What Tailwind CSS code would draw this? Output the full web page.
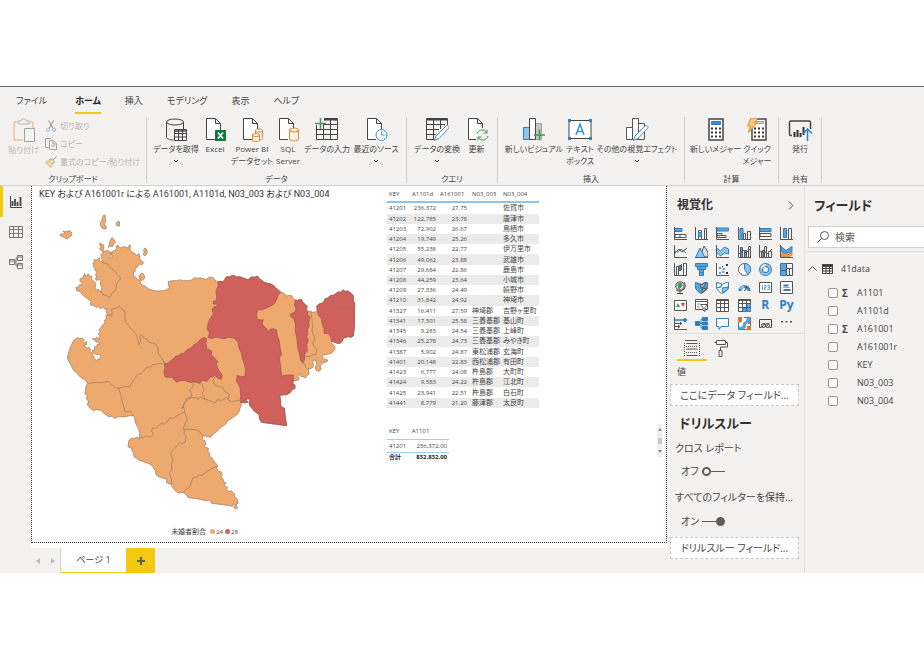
<!DOCTYPE html>
<html lang="ja">
  <head>
    <meta charset="UTF-8" />
    <meta name="viewport" content="width=device-width, initial-scale=1.0" />
    <title>Power BI Desktop</title>
    <script src="https://cdn.jsdelivr.net/npm/@tailwindcss/browser@4"></script>
  </head>
  <body
    class="bg-white pt-[86px] font-['Open_Sans','Noto_Sans_CJK_JP',sans-serif] [font-feature-settings:'palt'] text-[#444]"
  >
    <!-- Ribbon -->
    <header class="border-t border-t-[#666] border-b border-b-[#d2d0ce] bg-[#f3f2f1]">
      <nav class="flex h-[30px] gap-6 pl-4 text-[9px] leading-[28px] whitespace-nowrap">
        <a href="#" class="mr-1">ファイル</a>
        <a href="#" class="flex flex-col font-bold text-[#222]">
          <span class="h-[25px]">ホーム</span>
          <span class="h-[2px] bg-[#f2c811]"></span>
        </a>
        <a href="#">挿入</a>
        <a href="#">モデリング</a>
        <a href="#">表示</a>
        <a href="#">ヘルプ</a>
      </nav>

      <div class="flex h-[68px] pb-[2px] text-[8px] leading-[12px] whitespace-nowrap [&_p]:leading-[8px]">
        <!-- Clipboard -->
        <section class="flex w-[147px] flex-col justify-between border-r border-[#d2d0ce]">
          <div class="flex gap-[6px] pl-[8px] text-[#b5b3b1]">
            <button class="flex w-[31px] flex-col items-center self-start pt-px">
              <svg class="h-[26px] w-[24px]" viewBox="0 0 24 26" fill="none">
                <path d="M5 4H2v18h9M17 4h4v6" stroke="#efc893" stroke-width="1.5" />
                <path d="M6 6V3h3c0-3 5-3 5 0h3v3z" stroke="#b9b7b5" />
                <path d="M12.500 10.500h10v13h-10z" stroke="#a5a3a1" fill="#f6f5f4" />
              </svg>
              <span>貼り付け</span>
            </button>
            <div class="flex flex-col gap-[6px] pt-[3px]">
              <button class="flex items-center gap-[3px]">
                <svg class="size-3" viewBox="0 0 12 12" fill="none">
                  <path d="M3.500 0.500L8 8.500M8.500 0.500L4 8.500" stroke="#8f8d8b" />
                  <circle cx="3" cy="9.800" r="1.600" stroke="#9dbcd8" />
                  <circle cx="9" cy="9.800" r="1.600" stroke="#9dbcd8" />
                </svg>
                切り取り
              </button>
              <button class="flex items-center gap-[3px]">
                <svg class="size-3" viewBox="0 0 12 12" fill="none" stroke="#a5a3a1">
                  <path d="M4 9.500H.5V.5H6" />
                  <path d="M4.500 2.500h4l3 3v6h-7zM8 3v3h3M6 8h4" />
                </svg>
                コピー
              </button>
              <button class="flex items-center gap-[3px]">
                <svg class="size-3" viewBox="0 0 12 12" fill="none">
                  <path d="M.5 6l4-2 3.500 3.500-2.500 4z" fill="#f4d2a8" stroke="#e3b988" />
                  <path d="M4.500 4l1.500-1.500 3.500 3.500L8 7.500M8 4l3.500-3.500" stroke="#8f8d8b" />
                </svg>
                書式のコピー/貼り付け
              </button>
            </div>
          </div>
          <p class="text-center">クリップボード</p>
        </section>

        <!-- Data -->
        <section class="flex w-[260px] flex-col justify-between border-r border-[#d2d0ce]">
          <div class="flex pl-[5px] pt-px">
            <button class="flex w-[48px] flex-col items-center">
              <svg class="h-[25px] w-6" viewBox="0 0 24 25" fill="none" stroke="#444">
                <ellipse cx="11" cy="4" rx="8.500" ry="3" />
                <path d="M2.500 4v15c0 1.500 3 3 7 3M19.500 4v7" />
                <path d="M10.500 11.500h12v11h-12zM10.500 15.500h12M10.500 19h12M14.500 12v10M18.500 12v10" fill="#f8f8f8" />
                <path d="M11 13h11" stroke-width="1.500" />
              </svg>
              <span>データを取得</span>
              <svg class="mt-1 h-1 w-[6px]" viewBox="0 0 6 4" fill="none" stroke="#333"><path d="M1 1l2 2 2-2" /></svg>
            </button>
            <button class="flex w-[30px] flex-col items-center">
              <svg class="h-[25px] w-6" viewBox="0 0 24 25" fill="none">
                <path d="M12 21.500H3.500V.5h9l5 5V13M12.500.5v5h5" fill="#fff" stroke="#444" />
                <path d="M12 12h11v11H12z" fill="#10793f" />
                <path d="M15 14.500l5 6M20 14.500l-5 6" stroke="#fff" stroke-width="1.500" />
              </svg>
              <span>Excel</span>
            </button>
            <button class="flex w-[44px] flex-col items-center">
              <svg class="h-[25px] w-6" viewBox="0 0 24 25" fill="none">
                <path d="M12 21.500H3.500V.5h9l5 5V11M12.500.5v5h5" fill="#fff" stroke="#444" />
                <path d="M15.500 12.500v8c0 2 7 2 7 0v-8c0-2-7-2-7 0c0 2 7 2 7 0" stroke="#de8437" fill="#fdf1e6" />
                <path d="M12.500 17v5c0 2 7 2 7 0v-5c0-2-7-2-7 0c0 2 7 2 7 0" stroke="#de8437" fill="#fdf1e6" />
              </svg>
              <span>Power BI<br />データセット</span>
            </button>
            <button class="flex w-[28px] flex-col items-center">
              <svg class="h-[25px] w-6" viewBox="0 0 24 25" fill="none">
                <path d="M12 21.500H3.500V.5h9l5 5V10M12.500.5v5h5" fill="#fff" stroke="#444" />
                <path d="M13.500 12v9c0 2.500 9 2.500 9 0v-9c0-2.500-9-2.500-9 0c0 2.500 9 2.500 9 0" stroke="#de8437" fill="#fdf1e6" />
              </svg>
              <span>SQL<br />Server</span>
            </button>
            <button class="flex w-[50px] flex-col items-center">
              <svg class="h-[25px] w-6" viewBox="0 0 24 25" fill="none">
                <path d="M1.500 7v14.500h21V.5H9M8.500 6v15.500M15.500 2v19.500M9 6.500h13M2 11.500h20M2 16.500h20" stroke="#444" />
                <path d="M9 1.500h13" stroke="#444" stroke-width="2" />
                <path d="M5.500 0v11M0 5.500h11" stroke="#3f9b55" stroke-width="1.500" />
              </svg>
              <span>データの入力</span>
            </button>
            <button class="flex w-[48px] flex-col items-center">
              <svg class="h-[25px] w-6" viewBox="0 0 24 25" fill="none">
                <path d="M12 21.500H3.500V.5h9l5 5V12M12.500.5v5h5" fill="#fff" stroke="#444" />
                <circle cx="17.500" cy="17" r="5.500" fill="#fff" stroke="#3a8fcf" />
                <path d="M17.500 13.500V17h3" stroke="#3a8fcf" />
              </svg>
              <span>最近のソース</span>
              <svg class="mt-1 h-1 w-[6px]" viewBox="0 0 6 4" fill="none" stroke="#333"><path d="M1 1l2 2 2-2" /></svg>
            </button>
          </div>
          <p class="text-center">データ</p>
        </section>

        <!-- Queries -->
        <section class="flex w-[91px] flex-col justify-between border-r border-[#d2d0ce]">
          <div class="flex pl-[5px] pt-px">
            <button class="flex w-[50px] flex-col items-center">
              <svg class="h-[25px] w-6" viewBox="0 0 24 25" fill="none">
                <path d="M10 21.500H1.500V.5h21V7M8.500 2v19.500M15.500 2v9M2 6.500h18M2 11.500h12M2 16.500h9" stroke="#444" />
                <path d="M2 1.500h20" stroke="#444" stroke-width="2" />
                <path d="M9.500 22.500l1.500-4.500L21 8c1.500-1.500 4 .8 2.500 2.500L14 20.500z" fill="#fff" stroke="#3a8fcf" />
              </svg>
              <span>データの変換</span>
              <svg class="mt-1 h-1 w-[6px]" viewBox="0 0 6 4" fill="none" stroke="#333"><path d="M1 1l2 2 2-2" /></svg>
            </button>
            <button class="flex w-[29px] flex-col items-center">
              <svg class="h-[25px] w-6" viewBox="0 0 24 25" fill="none">
                <path d="M11 21.500H3.500V.5h9l5 5V10M12.500.5v5h5" fill="#fff" stroke="#444" />
                <path d="M12 16c1-5 8-5.500 10-1v-3.500M22 15h-3.500M23 18c-1 5-8 5.500-10 1v3.500M13 19h3.500" stroke="#3f9b55" />
              </svg>
              <span>更新</span>
            </button>
          </div>
          <p class="text-center">クエリ</p>
        </section>

        <!-- Insert -->
        <section class="flex w-[187px] flex-col justify-between border-r border-[#d2d0ce]">
          <div class="flex pl-[6px] pt-px">
            <button class="flex w-[60px] flex-col items-center">
              <svg class="h-[25px] w-6" viewBox="0 0 24 25" fill="none">
                <path d="M1.500 9.500h6v12h-6z" fill="#8fc5ee" stroke="#2f7fbd" />
                <path d="M13.500 5.500h6v16h-6z" fill="#c8c6c4" stroke="#a5a3a1" />
                <path d="M7.500.5h6v21h-6z" fill="#fff" stroke="#444" />
                <path d="M17.500 11.500v11M12 17h11" stroke="#3f9b55" stroke-width="1.500" />
              </svg>
              <span>新しいビジュアル</span>
            </button>
            <button class="flex w-[32px] flex-col items-center">
              <svg class="h-[25px] w-[26px]" viewBox="0 0 26 25" fill="none">
                <path d="M2 2.500h22v18H2z" stroke="#444" fill="#fff" />
                <path d="M9 17l4-11 4 11M10.500 13.500h5" stroke="#3a8fcf" stroke-width="1.500" />
                <path d="M1 1h3v3H1zM22 1h3v3h-3zM1 19h3v3H1zM22 19h3v3h-3z" fill="#2f7fbd" />
              </svg>
              <span>テキスト<br />ボックス</span>
            </button>
            <button class="flex w-[82px] flex-col items-center">
              <svg class="h-[25px] w-6" viewBox="0 0 24 25" fill="none">
                <path d="M1.500 9.500h6v12h-6zM13.500 5.500h6v16h-6zM7.500.5h6v21h-6z" fill="#fff" stroke="#555" />
                <path d="M8.500 22.500l1.500-4.500L20 8c1.500-1.500 4 .8 2.500 2.500L13 20.500z" fill="#fff" stroke="#3a8fcf" />
              </svg>
              <span>その他の視覚エフェクト</span>
              <svg class="mt-1 h-1 w-[6px]" viewBox="0 0 6 4" fill="none" stroke="#333"><path d="M1 1l2 2 2-2" /></svg>
            </button>
          </div>
          <p class="text-center">挿入</p>
        </section>

        <!-- Calculations -->
        <section class="flex w-[94px] flex-col justify-between border-r border-[#d2d0ce]">
          <div class="flex pl-[5px] pt-px">
            <button class="flex w-[51px] flex-col items-center">
              <svg class="h-[25px] w-6" viewBox="0 0 24 25" fill="none">
                <path d="M5 1h14v21H5z" fill="#fff" stroke="#444" stroke-width="1.500" />
                <path d="M7.500 3.500h9v3h-9z" fill="#3a8fcf" stroke="#2f7fbd" />
                <path d="M7 10.500h10M7 14.500h10M7 18.500h10" stroke="#333" stroke-width="2" stroke-dasharray="2" />
              </svg>
              <span>新しいメジャー</span>
            </button>
            <button class="flex w-[32px] flex-col items-center">
              <svg class="h-[25px] w-6" viewBox="0 0 24 25" fill="none">
                <path d="M7 1h14v21H7z" fill="#fff" stroke="#444" stroke-width="1.500" />
                <path d="M11.500 3.500h7v2h-7z" fill="#ddd" stroke="#999" />
                <path d="M9 10.500h10M9 14.500h10M9 18.500h10" stroke="#333" stroke-width="2" stroke-dasharray="2" />
                <path d="M6 0h7L9.500 5H12L3.500 14.500 5.500 8H2.500z" fill="#f9c875" stroke="#de8437" />
              </svg>
              <span>クイック<br />メジャー</span>
            </button>
          </div>
          <p class="text-center">計算</p>
        </section>

        <!-- Share -->
        <section class="flex w-[43px] flex-col justify-between border-r border-[#d2d0ce]">
          <div class="flex justify-center pt-px">
            <button class="flex flex-col items-center">
              <svg class="h-[25px] w-6" viewBox="0 0 24 25" fill="none">
                <path d="M4 17.500H3c-1 0-1.500-.5-1.500-1.500V4.500C1.500 3.500 2 3 3 3h18c1 0 1.500.5 1.500 1.500V11" stroke="#444" stroke-width="1.500" />
                <path d="M6.500 14v5M9.500 12v7M12.500 15v4M15.500 9v8" stroke="#333" stroke-width="2" />
                <path d="M19.500 23V11M15 15.500l4.500-4.500 4.500 4.500" stroke="#2f7fbd" stroke-width="1.500" />
              </svg>
              <span>発行</span>
            </button>
          </div>
          <p class="text-center">共有</p>
        </section>
      </div>
    </header>

    <main class="flex">
      <!-- View switcher -->
      <nav class="flex w-[31px] shrink-0 flex-col bg-[#f3f2f1]">
        <button aria-label="レポート" class="flex h-[31px] items-center border-l-[3px] border-[#f2c811] pl-[7px]">
          <svg class="size-3" viewBox="0 0 12 12" fill="none">
            <path d="M.5 0v11.500H12" stroke="#444" />
            <path d="M2.500 5v5M5 3v7M7.500 6v4M10.500 1v9" stroke="#444" stroke-width="1.800" />
          </svg>
        </button>
        <button aria-label="データ" class="flex h-[30px] items-center pl-[9px]">
          <svg class="h-3 w-[14px]" viewBox="0 0 14 12" fill="none" stroke="#777">
            <path d="M.5.5h13v11H.5zM.5 3.500h13M.5 7.500h13M4.500.5v11M9.500.5v11" />
          </svg>
        </button>
        <button aria-label="モデル" class="flex h-[30px] items-center pl-[9px]">
          <svg class="size-[14px]" viewBox="0 0 14 14" fill="none" stroke="#777">
            <path d="M.5 4.500h5v5h-5zM8.500.5h5v5h-5zM8.500 8.500h5v5h-5zM.5 6h5M8.500 2h5M8.500 10h5M5.500 7H7V3h1.500M7 7v4h1.500" />
          </svg>
        </button>
      </nav>

      <div class="flex min-w-0 flex-1 flex-col">
        <!-- Report canvas -->
        <div class="flex border-r border-b border-l border-dotted border-[#333] pb-px">
          <section class="flex w-[345px] shrink-0 flex-col">
            <h2 class="pl-[7px] font-[Roboto,'Noto_Sans_CJK_JP',sans-serif] text-[9px] leading-[16px] whitespace-nowrap text-[#333]">
              KEY および A161001r による A161001, A1101d, N03_003 および N03_004
            </h2>
            <svg class="h-[320px] w-[345px]" viewBox="96 54 1035 960" fill="#eda96e" stroke="#94795f" stroke-width="2" stroke-linejoin="round">
              <!-- Islands -->
              <path d="M308 98L312 93 317 95 315 102 318 110 312 120 320 130 318 135 308 134 302 126 301 116 306 108ZM350 115L354 112 358 113 359 120 357 127 352 125 348 122ZM180 152L184 149 190 151 194 146 188 142 196 143 205 140 211 141 216 148 212 158 206 160 202 166 192 160 182 156ZM330 170L336 160 341 166 347 175 341 180 338 188 330 186 325 190 328 180ZM430 200L434 192 440 195 442 205 438 213 433 215 429 210 434 204Z" />
              <!-- Prefecture -->
              <path
                d="M298 177L303 180 309 181 312 188 311 196 308 200 318 202 322 198 328 204 333 203 334 210 330 216 330 222 335 222 336 214 333 208 340 200 346 199 350 192 348 186 354 184 358 190 364 192 368 188 376 189 385 192 388 182 392 185 390 194 393 202 399 206 405 208 410 214 417 209 420 216 419 224 426 232 431 236 426 242 418 240 412 250 405 252 406 262 400 265 402 278 408 280 412 287 420 288 418 275 422 270 428 268 433 274 434 282 428 288 421 292 422 298 428 304 435 306 445 314 458 319 470 321 490 320 502 316 508 310 505 302 506 292 516 290 530 290 540 287 550 290 562 290 575 288 582 281 592 283 600 281 610 284 620 286 628 279 640 281 645 288 653 294 660 292 670 293 675 285 680 278 688 279 695 275 702 275 710 279 718 278 725 280 735 284 745 288 752 280 758 279 764 280 772 276 778 284 785 288 790 294 802 298 810 299 820 304 830 314 842 324 852 328 860 336 868 334 875 335 885 348 893 349 905 346 907 354 912 358 922 368 919 375 922 384 930 381 938 385 950 383 952 374 950 366 958 360 970 356 975 345 983 342 990 335 1000 334 1008 328 1015 324 1022 324 1030 318 1035 322 1043 321 1050 325 1060 335 1060 348 1064 360 1063 430 1060 456 1053 460 1045 458 1030 462 1027 472 1020 478 1012 478 1005 475 995 472 996 480 1002 484 1006 492 1000 502 995 508 982 511 970 512 967 518 972 524 983 528 981 533 970 536 965 540 960 546 964 555 960 560 955 562 948 558 945 550 950 542 948 530 940 528 938 536 941 544 938 551 925 556 926 563 928 570 922 575 915 582 908 578 902 578 902 570 898 570 894 578 898 586 892 590 880 590 878 598 885 604 885 613 878 616 870 626 860 632 840 633 840 640 842 652 842 666 853 673 856 700 860 725 830 721 785 715 778 703 778 693 764 682 750 666 747 656 750 648 747 645 740 645 738 650 744 653 740 656 722 656 724 664 720 673 717 684 710 693 696 702 680 713 678 720 663 730 650 743 640 750 632 760 608 755 608 766 616 772 618 782 612 784 612 788 619 790 625 793 624 803 630 808 628 816 634 820 640 828 646 836 653 845 650 853 656 862 664 864 667 873 663 880 669 884 671 893 678 897 672 904 682 910 680 919 688 922 695 920 698 926 705 930 702 936 708 942 713 946 714 958 708 963 700 960 698 967 668 962 635 958 628 948 620 951 596 945 565 941 558 932 550 925 540 927 532 926 520 914 512 900 503 898 500 896 500 886 495 884 475 878 468 872 466 858 460 854 460 850 450 840 430 833 416 828 402 818 400 806 395 798 395 793 384 788 387 768 396 762 404 763 410 759 418 763 419 745 415 733 410 724 405 713 404 702 400 695 385 696 370 699 355 698 345 703 334 697 325 698 310 686 300 678 290 677 280 680 270 672 262 663 265 652 258 642 263 634 254 630 257 620 257 608 262 598 258 590 240 578 230 568 220 558 212 542 202 523 205 508 210 493 220 470 232 461 240 464 247 462 252 468 248 472 254 476 259 472 260 482 252 484 260 492 268 490 272 498 268 502 276 506 280 514 284 524 290 531 294 524 300 526 302 516 296 510 290 512 280 507 276 500 283 498 284 488 290 488 292 480 298 482 297 474 288 474 284 468 276 464 286 464 290 460 298 464 300 456 294 450 300 446 298 436 303 430 308 422 315 418 314 408 320 404 317 396 322 390 318 382 322 374 314 376 310 370 302 374 296 368 288 370 280 364 272 364 270 358 274 350 266 348 260 342 252 336 245 330 240 322 230 320 228 310 236 308 238 302 244 304 246 296 240 292 240 284 248 282 254 268 256 276 266 270 270 278 275 276 275 286 284 294 288 302 285 312 290 318 296 316 300 322 305 318 305 308 301 302 302 292 296 285 290 290 286 284 290 278 286 272 291 265 284 258 286 252 280 250 282 244 278 238 284 234 281 227 290 228 298 222 300 230 306 234 308 226 302 222 306 216 302 212 310 208 306 200 298 195 303 190Z"
              />
              <!-- 28% and over -->
              <g fill="#cf605c" stroke="#9a5552">
                <path
                  d="M653 294L660 292 670 293 675 285 680 278 688 279 695 275 702 275 710 279 718 278 725 280 735 284 745 288 752 280 758 279 764 280 772 276 778 284 785 288 790 294 802 298 810 299 820 304 830 314 842 324 834 334 832 344 828 350 822 360 812 366 795 374 785 378 774 377 770 388 771 404 780 408 790 407 786 418 793 428 800 434 803 445 810 436 820 434 830 438 832 455 838 470 840 490 845 512 838 520 842 548 845 577 855 573 880 573 880 590 878 598 885 604 885 613 878 616 870 626 860 632 840 633 840 640 842 652 842 666 853 673 856 700 860 725 830 721 785 715 778 703 778 693 764 682 750 666 747 656 750 648 747 645 740 645 738 650 744 653 740 656 722 656 722 630 720 613 716 600 710 595 710 584 712 574 722 578 735 577 736 555 733 540 727 524 725 510 717 492 714 475 708 468 700 462 688 460 670 464 650 460 636 463 625 462 628 445 621 435 625 415 632 400 640 390 636 376 640 370 652 366 650 360 640 360 640 352 648 350 650 338 648 320 655 305Z"
                />
                <path d="M493 541L505 536 520 524 528 516 535 515 545 508 550 509 560 498 575 490 580 484 592 476 605 463 613 461 620 463 618 478 620 495 630 497 635 502 634 512 642 520 650 530 655 534 648 536 652 550 658 562 667 574 664 586 656 584 648 578 645 570 640 578 630 580 622 592 612 590 605 590 600 598 585 594 570 595 555 590 540 590 530 595 520 585 515 580 505 580 495 578 491 563 495 552Z" />
                <path d="M885 348L893 349 905 346 907 354 912 358 922 368 919 375 924 384 922 390 930 400 926 416 928 428 922 436 924 450 920 458 925 468 920 482 922 500 914 510 914 528 908 537 902 530 900 516 893 490 891 465 886 440 886 420 882 405 870 395 874 388 884 386 888 374 884 364Z" />
                <path d="M950 366L958 360 970 356 975 345 983 342 990 335 1000 334 1008 328 1015 324 1022 324 1030 318 1035 322 1043 321 1050 325 1060 335 1060 348 1064 360 1063 430 1060 456 1053 460 1045 458 1030 462 1027 472 1020 478 1012 478 1005 475 995 472 992 460 984 448 972 448 972 434 966 418 964 405 954 392Z" />
              </g>
              <!-- Municipal borders -->
              <path
                fill="none"
                d="M305 235L315 237 325 242 333 252 345 262 352 272 360 280 361 286 355 290 350 300 348 312 345 320 338 324 335 330 328 340 320 334 308 332 302 320M322 395L330 392 335 398 336 386 334 375 348 373 358 367 364 374 376 385 374 396 376 412 382 420 390 430 400 440 408 452 414 468 418 482 422 470 420 454 424 452 430 460 440 465 446 474 455 477 464 478 474 490 475 510 483 518 490 530 495 538M495 538L475 539 460 542 450 549 440 550 432 560 425 568 412 572 404 584 392 600 390 608 370 609 355 613 345 611 340 606 330 598 325 592 305 596 290 595 265 598M355 613L360 625 365 640 366 652 372 670 375 682 382 684 390 681 396 690 400 695M418 763L430 760 440 755 448 760 455 758 460 748 454 742 458 733 470 732 478 722 485 718 493 721 500 715 510 701 520 704 530 696 545 688 554 684 552 670 545 673 552 660 560 643 575 638 575 628 568 618 578 610 580 598M545 677L552 660 562 648 575 641 590 640 592 646 602 640 615 646 630 650 645 658 655 645 660 652 668 648 680 640 685 648 695 653 722 648M605 598L608 608 612 618 606 632 612 638 615 646M645 578L638 592 645 603 660 608 668 610 675 623 688 630 686 643M554 684L562 708 556 718 550 736 575 736 590 738 600 744 608 755M555 738L552 748 558 758 556 774 545 780 540 776 530 786 512 806 518 828 514 845 516 858 508 868 514 884 515 903M653 845L636 854 620 863 607 874 595 873 592 878 578 883 574 895 570 908 558 916 550 925M932 383L936 405 938 430 936 440 945 465 938 475 940 485 952 497 946 512 935 513 930 518 915 517 908 532M908 537L915 540 918 552 928 556M975 345L995 350 1004 362 1022 375 1030 370 1040 368 1050 371 1052 378 1063 378"
              />
              <circle cx="707" cy="970" r="5" />
            </svg>
            <p class="flex h-[19px] items-center justify-center gap-px text-[7px] leading-[10px]">
              <span class="mr-[3px]">未婚者割合</span>
              <i class="size-[5px] rounded-full bg-[#eda96e]"></i><span class="text-[6px]">24</span>
              <i class="ml-px size-[5px] rounded-full bg-[#cf605c]"></i><span class="text-[6px]">28</span>
            </p>
          </section>

          <section class="flex flex-1 flex-col gap-4 pl-[10px] text-[7px] leading-[8px]">
            <table class="h-[222px] w-[152px] table-fixed border-collapse whitespace-nowrap">
              <colgroup>
                <col class="w-[22px]" />
                <col class="w-[29px]" />
                <col class="w-[32px]" />
                <col class="w-[31px]" />
                <col class="w-[38px]" />
              </colgroup>
              <thead class="text-left text-[6px]">
                <tr class="h-4 border-b-2 border-[#8cc4f0]">
                  <th class="p-0 pl-[2px] font-normal">KEY</th>
                  <th class="p-0 pl-[3px] font-normal">A1101d</th>
                  <th class="p-0 pl-[2px] font-normal">A161001</th>
                  <th class="p-0 pl-[2px] font-normal">N03_003</th>
                  <th class="p-0 pl-[2px] font-normal">N03_004</th>
                </tr>
              </thead>
              <tbody id="cityRows"></tbody>
            </table>

            <div class="flex justify-between pr-1">
              <table class="h-[37px] w-[62px] self-start border-collapse text-[6px] whitespace-nowrap">
                <thead>
                  <tr class="h-[15px] border-b border-[#9fd0ee] text-left">
                    <th class="p-0 pl-[2px] font-normal">KEY</th>
                    <th class="p-0 pl-[2px] font-normal">A1101</th>
                  </tr>
                </thead>
                <tbody>
                  <tr class="h-3 border-b border-[#9fd0ee]">
                    <td class="p-0 pl-[2px]">41201</td>
                    <td class="p-0 pr-[2px] text-right">236,372.00</td>
                  </tr>
                </tbody>
                <tfoot>
                  <tr class="font-bold text-[#222]">
                    <td class="p-0 pl-[2px]">合計</td>
                    <td class="p-0 pr-[2px] text-right">832,832.00</td>
                  </tr>
                </tfoot>
              </table>
              <div class="flex h-[33px] w-[5px] flex-col items-center justify-between bg-[#f0f0f0] py-1">
                <svg class="h-[3px] w-1" viewBox="0 0 4 3" fill="#888"><path d="M0 3l2-3 2 3z" /></svg>
                <i class="h-[6px] w-1 bg-[#c8c8c8]"></i>
                <svg class="h-[3px] w-1" viewBox="0 0 4 3" fill="#888"><path d="M0 0l2 3 2-3z" /></svg>
              </div>
            </div>
          </section>
        </div>

        <!-- Page tabs -->
        <div class="mt-[5px] flex h-[25px] bg-[#f3f2f1] text-[9px]">
          <div class="flex w-[30px] items-center justify-around border-r border-[#d2d0ce]">
            <button aria-label="前のページ"><svg class="h-[6px] w-1" viewBox="0 0 4 6" fill="#bbb"><path d="M4 0v6L0 3z" /></svg></button>
            <button aria-label="次のページ"><svg class="h-[6px] w-1" viewBox="0 0 4 6" fill="#bbb"><path d="M0 0v6l4-3z" /></svg></button>
          </div>
          <button class="w-[65px] border-b border-[#f2c811] bg-white">ページ 1</button>
          <button aria-label="新しいページ" class="flex w-[29px] items-center justify-center bg-[#f2c811]">
            <svg class="size-2" viewBox="0 0 8 8" stroke="#605e5c" stroke-width="2"><path d="M4 0v8M0 4h8" /></svg>
          </button>
        </div>
      </div>

      <!-- Visualizations -->
      <aside class="flex w-[138px] shrink-0 flex-col border-r border-[#e1dfdd] bg-[#f3f2f1] text-[10px] leading-[14px] whitespace-nowrap">
        <div class="flex h-[38px] items-center justify-between pr-[10px] pl-[10px]">
          <h2 class="text-[12px] font-bold text-[#333]">視覚化</h2>
          <button aria-label="折りたたむ"><svg class="h-[9px] w-[6px]" viewBox="0 0 6 9" fill="none" stroke="#555"><path d="M1 .5l4 4-4 4" /></svg></button>
        </div>
        <div class="mr-[7px] ml-[3px] grid grid-cols-6 [&_button]:flex [&_button]:h-[18px] [&_button]:items-center [&_button]:justify-center [&_svg]:size-[13px]">
          <button aria-label="積み上げ横棒グラフ"><svg viewBox="0 0 13 13" fill="none" stroke="#555"><path d="M.5 0v12.500H13" /><path d="M1 1.500h7v3H1z" fill="#58a4dc" stroke="#2f7fbd" /><path d="M1 7.500h11v3H1zM6 7.500v3" fill="#fff" /></svg></button>
          <button aria-label="積み上げ縦棒グラフ"><svg viewBox="0 0 13 13" fill="none" stroke="#555"><path d="M.5 0v12.500H13M3.500 3.500h3v9h-3zM9.500 1.500h2v11h-2z" /><path d="M3.500 5.500h3v4h-3z" fill="#58a4dc" stroke="#2f7fbd" /></svg></button>
          <button aria-label="集合横棒グラフ"><svg viewBox="0 0 13 13" fill="none" stroke="#555"><path d="M.5 0v12.500H13M1 6.500h5v2H1zM1 8.500h9v2H1z" /><path d="M1 1h11.500v3H1z" fill="#58a4dc" stroke="#2f7fbd" /></svg></button>
          <button aria-label="集合縦棒グラフ"><svg viewBox="0 0 13 13" fill="none" stroke="#555"><path d="M.5 0v12.500H13M5.500 6.500h2v6h-2zM9.500 4.500h3v8h-3z" /><path d="M2 1.500h3v11H2z" fill="#58a4dc" stroke="#2f7fbd" /></svg></button>
          <button aria-label="100% 積み上げ横棒グラフ"><svg viewBox="0 0 13 13" fill="none" stroke="#555"><path d="M.5 0v12.500H13M1 6.500h11v3H1z" /><path d="M1 1.500h11v3H1z" fill="#58a4dc" stroke="#2f7fbd" /></svg></button>
          <button aria-label="100% 積み上げ縦棒グラフ"><svg viewBox="0 0 13 13" fill="none" stroke="#555"><path d="M.5 0v12.500H13M8.500 1.500h3v11h-3z" /><path d="M3.500 1.500h3v9h-3z" fill="#58a4dc" stroke="#2f7fbd" /></svg></button>

          <button aria-label="折れ線グラフ"><svg viewBox="0 0 13 13" fill="none" stroke="#555"><path d="M.5 0v12.500H13M1 8l4-4 3 3 5-4" /><path d="M1 6l3 1 3-3 5 4" stroke="#2f7fbd" /></svg></button>
          <button aria-label="面グラフ"><svg viewBox="0 0 13 13" fill="none" stroke="#555"><path d="M5 12l4-11 4 6v5z" fill="#ddd" /><path d="M.5 12.500L5 3l5 9.500z" fill="#8fc5ee" stroke="#2f7fbd" /><path d="M.5 12.500H13" /></svg></button>
          <button aria-label="積み上げ面グラフ"><svg viewBox="0 0 13 13" fill="none" stroke="#555"><path d="M.5 3l4 3 4-4 4 2v5l-4-1-4 3-4-4z" fill="#8fc5ee" stroke="#2f7fbd" /><path d="M.5 0v12.500H13" /></svg></button>
          <button aria-label="折れ線および積み上げ縦棒グラフ"><svg viewBox="0 0 13 13" fill="none" stroke="#555"><path d="M2.500 2.500h2v10h-2zM6.500 5.500h2v7h-2z" fill="#58a4dc" /><path d="M.5 0v12.500H13M10.500 1.500h2v11h-2zM1 9l4-4 3 3 5-5" /></svg></button>
          <button aria-label="折れ線および集合縦棒グラフ"><svg viewBox="0 0 13 13" fill="none" stroke="#555"><path d="M2.500 6.500h2v6h-2z" fill="#58a4dc" /><path d="M.5 0v12.500H13M5.500 1.500h2v11h-2zM9.500 6.500h3v6h-3zM1 7l4-2 3 4 5-5" /></svg></button>
          <button aria-label="リボングラフ"><svg viewBox="0 0 13 13" fill="none"><path d="M1 1.500l5 4 6-4v5l-6 2-5-2z" fill="#58a4dc" stroke="#2f7fbd" /><path d="M1 9l3-1 3 2 5-3v3l-3 2H1z" fill="#ed9b4b" stroke="#de8437" /><path d="M.5 0v12.500H13" stroke="#555" /></svg></button>

          <button aria-label="ウォーターフォール図"><svg viewBox="0 0 13 13" fill="none" stroke="#555"><path d="M.5 0v12.500H13M2.500 3.500h2v9h-2zM9.500.5h3v12h-3zM7.500 1v6" /><path d="M5 2.500h2v5H5z" fill="#58a4dc" /></svg></button>
          <button aria-label="じょうご"><svg viewBox="0 0 13 13" fill="#58a4dc" stroke="#2f7fbd"><path d="M.5.5h12v3H.5zM2.500 3.500h8v3h-8zM4.500 6.500h4v3h-4zM4.500 9.500h4v3h-4z" /></svg></button>
          <button aria-label="散布図"><svg viewBox="0 0 13 13" fill="#333"><path d="M.5 0v12.500H13" fill="none" stroke="#555" /><path d="M10 1h2v2h-2zM6 3h1v1H6zM10 9h2v2h-2z" /><path d="M3 4h2v2H3zM7 5h2v2H7zM3 9h2v2H3zM6 8h2v2H6z" fill="#58a4dc" /></svg></button>
          <button aria-label="円グラフ"><svg viewBox="0 0 13 13" fill="#fff" stroke="#555"><circle cx="6.500" cy="6.500" r="6" /><path d="M6.500.5a6 6 0 0 1 3.500 11L6.500 6.500z" fill="#8fc5ee" stroke="#2f7fbd" /></svg></button>
          <button aria-label="ドーナツ グラフ"><svg viewBox="0 0 13 13" fill="none"><circle cx="6.500" cy="6.500" r="4.500" stroke="#2f7fbd" stroke-width="4" /><circle cx="6.500" cy="6.500" r="4.500" stroke="#8fc5ee" stroke-width="2" /><path d="M6.500 2a4.500 4.500 0 0 0-4 3" stroke="#fff" stroke-width="2" /></svg></button>
          <button aria-label="ツリーマップ"><svg viewBox="0 0 13 13" fill="none" stroke="#555"><path d="M.5.5h6v12h-6z" fill="#58a4dc" stroke="#2f7fbd" /><path d="M6.500.5h6v12h-6zM6.500 5.500h6M9.500 5.500v7M1 7.500h5" /></svg></button>

          <button aria-label="マップ"><svg viewBox="0 0 13 13" fill="none" stroke="#444"><circle cx="6" cy="5" r="4.200" fill="#ddd" /><path d="M4 3l3-1 1 3-3 3z" fill="#3f9b55" stroke="#3f9b55" /><path d="M10 1c3 4 0 9-4 9-2 0-3-.5-4-1M6 10v2M3 12.500h6" /></svg></button>
          <button aria-label="塗り分け地図"><svg viewBox="0 0 13 13" stroke="#2f7fbd"><path d="M.5 1.500l4 1 2 1 3-2h3v6l-3 3-3.500 2-3-2-2.500-3z" fill="#58a4dc" /><path d="M5 3l2 1 2-2h2l-2 4-3 1zM7 8l5-1-3 3-2 2z" fill="#aaa" stroke="#555" /></svg></button>
          <button aria-label="図形マップ"><svg viewBox="0 0 13 13" fill="#fff" stroke="#2f7fbd"><path d="M.5 1.500l4 1 2 1 3-2h3v6l-3 3-3.500 2-3-2-2.500-3z" /><path d="M1 7l4-1 1-3M6 7l6-1v2l-5 4z" fill="#8fc5ee" /></svg></button>
          <button aria-label="ゲージ"><svg viewBox="0 0 13 13" fill="none"><path d="M2 10a4.500 4.500 0 0 1 9 0" stroke="#2f7fbd" stroke-width="3" /><path d="M2.500 8a4.500 4.500 0 0 1 4-2.500" stroke="#8fc5ee" stroke-width="2" /><path d="M6.500 10L9 5.500" stroke="#333" /></svg></button>
          <button aria-label="カード"><svg viewBox="0 0 13 13" fill="#fff" stroke="#555"><path d="M.5 1.500h12v10H.5z" /><path d="M3.500 4v5M5 4.500h2v2H5.500v2H7M8.500 4.500h2v4h-2M9 6.500h1" stroke="#58a4dc" /></svg></button>
          <button aria-label="複数の行カード"><svg viewBox="0 0 13 13" fill="#fff" stroke="#555"><path d="M.5.5h12v12H.5z" /><path d="M3.500 4.500h5M3.500 9h7" stroke="#2f7fbd" stroke-width="2" /><path d="M3 6.500h7" stroke="#aaa" /></svg></button>

          <button aria-label="KPI"><svg viewBox="0 0 13 13" fill="#fff" stroke="#555"><path d="M.5 1.500h12v10H.5z" /><path d="M2 8l2-4 2 4z" fill="#3f9b55" stroke="none" /><path d="M7 4h4L9 8z" fill="#d13438" stroke="none" /></svg></button>
          <button aria-label="スライサー"><svg viewBox="0 0 13 13" fill="#fff" stroke="#555"><path d="M.5.5h12v10H.5zM.5 2.500h12M2.500 5h2M2.500 8h2" /><path d="M5.500 5.500h7l-2.500 3v4l-2-1.500V8.500z" /></svg></button>
          <button aria-label="テーブル"><svg viewBox="0 0 13 13" fill="#fff" stroke="#555"><path d="M.5.5h12v12H.5zM.5 4.500h12M.5 8.500h12M4.500.5v12M8.500.5v12" /><path d="M1 1.500h11" /></svg></button>
          <button aria-label="マトリックス"><svg viewBox="0 0 13 13" fill="#fff" stroke="#555"><path d="M.5.5h12v12H.5z" /><path d="M5 9h7v3H5zM9 5h3v4H9z" fill="#58a4dc" stroke="#58a4dc" /><path d="M.5 4.500h12M.5 8.500h12M4.500.5v12M8.500.5v12M1 1.500h11" fill="none" /></svg></button>
          <button class="text-[12px] font-bold text-[#2f7fbd]">R</button>
          <button class="text-[12px] font-bold text-[#2f7fbd]">Py</button>

          <button aria-label="主要なインフルエンサー"><svg viewBox="0 0 13 13" fill="none" stroke="#555"><path d="M.5 0v12.500H13M1 6.500h6M1 9.500h4" /><path d="M1 3h9" stroke="#2f7fbd" stroke-width="1.500" /><circle cx="11" cy="3" r="1.500" fill="#2f7fbd" stroke="#2f7fbd" /><path d="M6 5l2 1.500L6 8M4 8l2 1.500L4 11" /></svg></button>
          <button aria-label="分解ツリー"><svg viewBox="0 0 13 13" fill="#2f7fbd" stroke="#2f7fbd"><path d="M.5 4.500h4v4h-4zM7.500.5h5v3h-5zM7.500 5h5v3h-5zM7.500 9.500h5v3h-5z" /><path d="M4 6.500h4M6 2v9h2M6 2h2" fill="none" /></svg></button>
          <button aria-label="Q&amp;A"><svg viewBox="0 0 13 13" fill="#fff" stroke="#2f7fbd"><path d="M.5 1.500h12v8H5l-2 3v-3H.5z" /></svg></button>
          <button aria-label="ArcGIS Maps"><svg viewBox="0 0 13 13" fill="none"><path d="M.5 5v7.500h12V.5H6" stroke="#2f7fbd" fill="#fff" /><path d="M1 10c3 0 4-1 4-3s3-2 3-4 2-2 4-2v4c-3 1-4 2-4 4s-1 3-2 3H1z" fill="#58a4dc" /><path d="M0 0h4v4L2 6 0 4zM10 5h2v2h-2zM9 9h4v4H9z" fill="#e0701a" /></svg></button>
          <button aria-label="Power Apps"><svg viewBox="0 0 13 13" fill="none" stroke="#444"><path d="M2.500 10.500h-2v-8h12v8h-2" /><circle cx="4.500" cy="8.500" r="2" /><circle cx="8.500" cy="8.500" r="2" /><path d="M3 10l3-4M7 10l3-4" /></svg></button>
          <button aria-label="その他"><svg viewBox="0 0 13 13" fill="#555"><path d="M1 4h2v1.500H1zM5.500 4h2v1.500h-2zM10 4h2v1.500h-2z" /></svg></button>
        </div>

        <div class="mt-px flex gap-[15px] border-t border-[#e1dfdd] pt-[6px] pl-[10px]">
          <button aria-label="フィールド" class="flex flex-col items-center gap-[2px]">
            <svg class="h-[17px] w-4" viewBox="0 0 16 17" fill="none" stroke="#555"><path d="M1 .5h12M2.500 3.500h11M2.500 9h11M2.500 15.500h11" /><path d="M.5 3v13M15.500 3v13M2 6.500h12M2 12.500h12" stroke-dasharray="1 1" /></svg>
            <span class="h-[2px] w-[30px] bg-[#f2c811]"></span>
          </button>
          <button aria-label="書式" class="-ml-2 self-start">
            <svg class="h-[17px] w-[14px]" viewBox="0 0 14 17" fill="none" stroke="#555"><path d="M2.500.5h9v4h-9zM.5 2.500h2M11.500 2.500h2v4.500h-7v3M5 10.500h3v6H5z" /></svg>
          </button>
        </div>
        <p class="mt-1 pl-[10px] text-[9px]">値</p>
        <div class="mt-[5px] mr-[5px] ml-[3px] h-[22px] border border-dashed border-[#c8c6c4] bg-white text-center leading-[20px]">ここにデータ フィールド...</div>
        <h3 class="mt-[9px] pl-[12px] text-[13px] leading-[16px] font-bold text-[#333]">ドリルスルー</h3>
        <p class="mt-[10px] pl-2">クロス レポート</p>
        <label class="mt-2 flex h-4 items-center gap-[3px] pl-[14px]">
          オフ
          <input type="checkbox" role="switch" class="h-px w-[23px] appearance-none bg-[#605e5c] before:block before:size-[9px] before:-translate-y-1 before:rounded-full before:border-2 before:border-[#605e5c] before:bg-white checked:before:ml-auto checked:before:bg-[#605e5c]" />
        </label>
        <p class="mt-[11px] pl-2">すべてのフィルターを保持...</p>
        <label class="mt-[9px] flex h-4 items-center gap-[3px] pl-[14px]">
          オン
          <input type="checkbox" role="switch" checked class="h-px w-[23px] appearance-none bg-[#605e5c] before:block before:size-[9px] before:-translate-y-1 before:rounded-full before:border-2 before:border-[#605e5c] before:bg-white checked:before:ml-auto checked:before:bg-[#605e5c]" />
        </label>
        <div class="mt-2 mr-[5px] ml-[3px] h-[22px] border border-dashed border-[#c8c6c4] bg-white text-center leading-[20px]">ドリルスルー フィールド...</div>
      </aside>

      <!-- Fields -->
      <aside class="w-[119px] shrink-0 bg-[#f3f2f1] text-[9px] whitespace-nowrap">
        <h2 class="pl-[9px] text-[13px] leading-[38px] font-bold text-[#333]">フィールド</h2>
        <div class="mt-[2px] border-b border-[#e1dfdd] pb-[3px] pl-[3px]">
          <label class="flex h-[22px] items-center gap-[6px] border border-r-0 border-[#d2d0ce] bg-white pl-2">
            <svg class="size-3" viewBox="0 0 12 12" fill="none" stroke="#555"><circle cx="7.500" cy="4.500" r="4" /><path d="M4.500 7.500L.5 11.500" /></svg>
            <input type="search" placeholder="検索" aria-label="検索" class="w-20 text-[10px] placeholder:text-[#555]" />
          </label>
        </div>
        <button class="mt-[7px] flex h-[19px] items-center pl-[3px]">
          <svg class="h-[5px] w-[9px]" viewBox="0 0 9 5" fill="none" stroke="#555"><path d="M.5 4.500l4-4 4 4" /></svg>
          <svg class="ml-[5px] h-[10px] w-[11px]" viewBox="0 0 11 10" fill="none" stroke="#444"><path d="M.5.500h10v9H.5zM.5 4.500h10M.5 7h10M4 2v8M7.500 2v8" /><path d="M0 1.500h11" stroke-width="3" /></svg>
          <span class="ml-2">41data</span>
        </button>
        <ul id="fieldList" class="mt-[6px]"></ul>
      </aside>
    </main>

    <script>
      const cities = [
        ["41201", "236,372", "27.75", "", "佐賀市"],
        ["41202", "122,785", "23.78", "", "唐津市"],
        ["41203", "72,902", "26.67", "", "鳥栖市"],
        ["41204", "19,749", "25.26", "", "多久市"],
        ["41205", "55,238", "22.77", "", "伊万里市"],
        ["41206", "49,062", "23.88", "", "武雄市"],
        ["41207", "29,684", "22.86", "", "鹿島市"],
        ["41208", "44,259", "23.64", "", "小城市"],
        ["41209", "27,336", "24.49", "", "嬉野市"],
        ["41210", "31,842", "24.92", "", "神埼市"],
        ["41327", "16,411", "27.59", "神埼郡", "吉野ヶ里町"],
        ["41341", "17,501", "25.58", "三養基郡", "基山町"],
        ["41345", "9,283", "24.54", "三養基郡", "上峰町"],
        ["41346", "25,278", "24.73", "三養基郡", "みやき町"],
        ["41387", "5,902", "24.87", "東松浦郡", "玄海町"],
        ["41401", "20,148", "22.83", "西松浦郡", "有田町"],
        ["41423", "6,777", "24.08", "杵島郡", "大町町"],
        ["41424", "9,583", "24.22", "杵島郡", "江北町"],
        ["41425", "23,941", "22.51", "杵島郡", "白石町"],
        ["41441", "8,779", "21.20", "藤津郡", "太良町"],
      ];

      document.getElementById("cityRows").innerHTML = cities
        .map(
          ([key, total, rate, county, city]) => `
          <tr class="even:bg-[#ebebeb]">
            <td class="p-0 pl-[2px] text-[6px]">${key}</td>
            <td class="p-0 pr-[2px] text-right text-[6px]">${total}</td>
            <td class="p-0 pr-[3px] text-right text-[6px]">${rate}</td>
            <td class="p-0 pl-[2px]">${county}</td>
            <td class="p-0 pl-[2px]">${city}</td>
          </tr>`
        )
        .join("");

      // Fields marked with a sigma are numeric
      const fields = [
        ["A1101", true],
        ["A1101d", false],
        ["A161001", true],
        ["A161001r", false],
        ["KEY", false],
        ["N03_003", false],
        ["N03_004", false],
      ];

      document.getElementById("fieldList").innerHTML = fields
        .map(
          ([name, numeric]) => `
          <li>
            <label class="flex h-[18px] items-center pl-[23px]">
              <input type="checkbox" class="size-[10px] appearance-none rounded-[2px] border border-[#979593] bg-white" />
              <span class="w-[19px] pl-1 text-[10px] font-bold">${numeric ? "Σ" : ""}</span>
              ${name}
            </label>
          </li>`
        )
        .join("");
    </script>
  </body>
</html>
